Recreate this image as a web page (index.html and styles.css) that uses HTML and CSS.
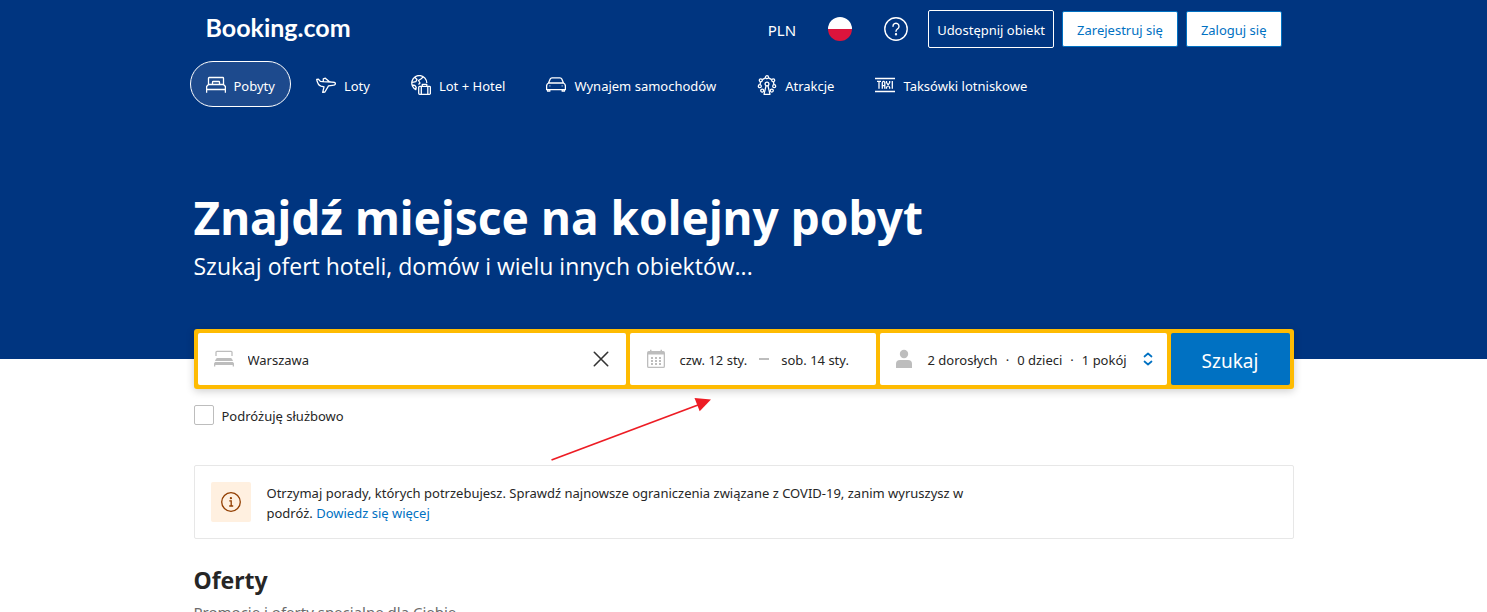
FILE: index.html
```html
<!DOCTYPE html>
<html lang="pl">
<head>
<meta charset="utf-8">
<meta name="viewport" content="width=device-width, initial-scale=1">
<title>Booking.com</title>
<link rel="stylesheet" href="styles.css">
</head>
<body>
<header class="header">
  <div class="container">
    <div class="topbar">
      <a class="logo" href="#">Booking.com</a>
      <div class="actions">
        <button class="currency" type="button">PLN</button>
        <button class="round" type="button" aria-label="Język: polski">
          <svg class="flag" viewBox="0 0 24 24"><path fill="#fff" d="M0 12a12 12 0 0 1 24 0z"/><path fill="#dc143c" d="M0 12a12 12 0 0 0 24 0z"/></svg>
        </button>
        <button class="round" type="button" aria-label="Pomoc">
          <svg class="help" viewBox="0 0 24 24" fill="none" stroke="#fff" stroke-width="1.4" stroke-linecap="round"><circle cx="12" cy="12" r="11.2"/><path d="M9 9.3a3 3 0 1 1 4.6 2.5c-1 .7-1.6 1.2-1.6 2.4"/><circle cx="12" cy="17.3" r=".5" fill="#fff"/></svg>
        </button>
        <a class="btn btn-outline" href="#">Udostępnij obiekt</a>
        <a class="btn btn-light" href="#">Zarejestruj się</a>
        <a class="btn btn-light" href="#">Zaloguj się</a>
      </div>
    </div>
    <nav class="tabs">
      <a class="tab tab-active" href="#">
        <svg class="tab-icon" viewBox="0 0 20 20"><path d="M2.500 9.500V3.200q0-.7.700-.7h13.600q.7 0 .7.700v6.300M6.500 9V7.200q0-.7.700-.7h5.600q.7 0 .7.700V9M.6 17.800V11.500L2.500 9.500h15l1.900 2v6.300M.6 14.500h18.800"/></svg>
        Pobyty</a>
      <a class="tab" href="#">
        <svg class="tab-icon" viewBox="0 0 20 20"><path d="M.7 4.500 2.400 4.200l2 2.200 2.400.2 8.500.4c2.800 0 4.100.8 4.100 1.700s-1.300 1.500-2.900 1.600l-4 .5-3.600 6.200-2.200.4 1.300-5.600-3-.7C2.500 10.300 1.300 7.500.7 4.500zM7.300 6.500V3.800l2-.6 4.200 3.600"/></svg>
        Loty</a>
      <a class="tab" href="#">
        <svg class="tab-icon" viewBox="0 0 20 20"><path d="M5.300 14.900A7.500 7.500 0 1 1 15.800 8M4 2.500l2 2-1.200 2.200-3.300.6M1.300 10l2.500.3 1.400 2-.4 2.300M12.500 1.600l-2.300 2.200L7.500 5.500 9 8l-1.500 1.500"/><rect x="7.700" y="11.300" width="11.700" height="8" rx="1"/><path d="M11.300 11V9.300h4.500V11M10.300 11.500v7.500M16.800 11.500v7.500"/></svg>
        Lot + Hotel</a>
      <a class="tab" href="#">
        <svg class="tab-icon" viewBox="0 0 20 20"><path d="M2.400 8.300 4.200 4q.5-1.200 1.800-1.200h8q1.300 0 1.800 1.200l1.800 4.300M2.500 8h15q1.900 1 1.900 3v3.700H.6V11q0-2 1.900-3zM1.600 14.700v1.500h2.200v-1.500M16.200 14.700v1.500h2.200v-1.500M3.500 10.800h.8M15.700 10.800h.8"/></svg>
        Wynajem samochodów</a>
      <a class="tab" href="#">
        <svg class="tab-icon" viewBox="0 0 20 20"><circle cx="10" cy="2.200" r="1.500"/><circle cx="3.800" cy="5.300" r="1.500"/><circle cx="16.200" cy="5.300" r="1.500"/><circle cx="2.800" cy="11.200" r="1.500"/><circle cx="17.200" cy="11.200" r="1.500"/><circle cx="5.200" cy="15.600" r="1.500"/><circle cx="14.800" cy="15.600" r="1.500"/><circle cx="10" cy="9" r="1.900"/><path d="M5.300 4.600 8.500 2.900M14.700 4.600 11.500 2.900M3.500 6.800l-.4 2.900M16.500 6.800l.4 2.900M9 10.800 7 19.300h6l-2-8.500"/></svg>
        Atrakcje</a>
      <a class="tab" href="#">
        <svg class="tab-icon" viewBox="0 0 20 20"><path d="M0 3.500h20M0 16.500h20M2 6.300h4M4 6.300v7.400M7.300 13.700V7.500l.8-1.200h.9l.8 1.200v6.200M7.300 10.700h2.500M11.500 6v1.500l3.200 5v1.200M14.700 6v1.500l-3.200 5v1.200M17.300 6v7.700"/></svg>
        Taksówki lotniskowe</a>
    </nav>
    <div class="hero">
      <h1 class="hero-title">Znajdź miejsce na kolejny pobyt</h1>
      <p class="hero-text">Szukaj ofert hoteli, domów i wielu innych obiektów...</p>
    </div>
  </div>
</header>
<main class="container main">
  <form class="search">
    <div class="field field-place">
      <svg class="field-icon" viewBox="0 0 20 20"><path fill="none" stroke="#bdbdbd" stroke-width="1.300" d="M2 7V3.200q0-.9.900-.9h14.200q.9 0 .9.900V7"/><path fill="#bdbdbd" d="M3.500 9h13q1 0 1.700 1.200l.8 1.800H1l.8-1.800Q2.500 9 3.500 9zM1 13h18l1 1.500v3h-1.300V16H1.300v1.500H0v-3z"/></svg>
      <input class="place" type="text" value="Warszawa" aria-label="Cel podróży">
      <button class="clear" type="button" aria-label="Wyczyść"><svg viewBox="0 0 16 16"><path fill="none" stroke="#333" stroke-width="1.600" stroke-linecap="round" d="m1.300 1.300 13.400 13.400M14.700 1.300 1.300 14.700"/></svg></button>
    </div>
    <div class="field field-dates">
      <svg class="field-icon" viewBox="0 0 20 20" fill="#bdbdbd"><path d="M1 4q0-2 1.800-2H4V.8h1.500V2h9V.8H16V2h1.200Q19 2 19 4v1.500H1z"/><path fill="none" stroke="#bdbdbd" stroke-width="1.300" d="M1.650 5v12.200q0 1.200 1.200 1.200h14.300q1.200 0 1.200-1.200V5"/><path d="M5 8h2v2H5zM9 8h2v2H9zM13 8h2v2h-2zM5 11h2v2H5zM9 11h2v2H9zM13 11h2v2h-2zM5 14h2v2H5zM9 14h2v2H9zM13 14h2v2h-2z"/></svg>
      <button class="plain" type="button">czw. 12 sty.</button>
      <span class="dash"></span>
      <button class="plain" type="button">sob. 14 sty.</button>
    </div>
    <button class="field field-guests plain" type="button">
      <svg class="field-icon" viewBox="0 0 20 20" fill="#bdbdbd"><circle cx="10" cy="5" r="4.200"/><path d="M2 19v-4q0-4 4-4h8q4 0 4 4v4z"/></svg>
      <span class="guests"><span>2 dorosłych</span><span>·</span><span>0 dzieci</span><span>·</span><span>1 pokój</span></span>
      <svg class="chevrons" viewBox="0 0 10 14"><path fill="none" stroke="#0071c2" stroke-width="1.700" stroke-linecap="round" stroke-linejoin="round" d="m1.500 4.500 3.500-3 3.500 3M1.500 9.500l3.500 3 3.500-3"/></svg>
    </button>
    <button class="submit" type="submit">Szukaj</button>
  </form>
  <svg class="arrow" viewBox="0 0 162 64"><path stroke="#ed1c24" stroke-width="1.800" d="M1.500 62 148 7"/><path fill="#ed1c24" d="M161 1.500 144.500 0l5.200 13.200z"/></svg>
  <label class="business"><input class="check" type="checkbox"><span class="business-text">Podróżuję służbowo</span></label>
  <section class="notice">
    <span class="notice-badge"><svg viewBox="0 0 20 20" fill="none" stroke="#923e01" stroke-width="1.300"><circle cx="10" cy="10" r="9.300"/><path d="M8.300 8.800h1.900v5M8.200 14h4"/><circle cx="9.900" cy="6.200" r=".5" fill="#923e01"/></svg></span>
    <p class="notice-text">Otrzymaj porady, których potrzebujesz. Sprawdź najnowsze ograniczenia związane z COVID-19, zanim wyruszysz w podróż. <a class="link" href="#">Dowiedz się więcej</a></p>
  </section>
  <section class="offers">
    <h2 class="offers-title">Oferty</h2>
    <p class="offers-text">Promocje i oferty specjalne dla Ciebie</p>
  </section>
</main>
</body>
</html>
```
FILE: styles.css
```css
* { box-sizing: border-box; }
body {
  margin: 0;
  height: 100vh;
  overflow: hidden;
  background: #fff;
  color: #262626;
  font: 13px/20px "Noto Sans", "Open Sans", sans-serif;
}
h1, h2, p { margin: 0; }
a { text-decoration: none; }
button, input { font: inherit; color: inherit; }
button { border: 0; padding: 0; background: none; cursor: pointer; }
svg { display: block; flex: none; }

.container { max-width: 1100px; margin: 0 auto; }
.header { background: #003580; color: #fff; padding-bottom: 77px; }

.topbar { display: flex; justify-content: space-between; align-items: center; height: 57px; padding: 0 12px; }
.logo { color: #fff; font: 700 25px/32px Lato, sans-serif; padding-bottom: 4px; }
.actions { display: flex; align-items: center; gap: 8px; }
.currency { font-size: 15px; padding: 2px 12px 0 0; }
.round { width: 48px; display: flex; justify-content: center; }
.flag, .help { width: 24px; height: 24px; }
.btn { padding: 8px 14px 6px; border: 1px solid #0071c2; border-radius: 2px; white-space: nowrap; }
.btn-outline { padding: 9px 8px 7px; border-color: #fff; color: #fff; }
.btn-light { background: #fff; color: #0071c2; }

.tabs { display: flex; gap: 9px; margin: 4px -4px 0; }
.tab { display: flex; align-items: center; gap: 8px; height: 46px; padding: 3px 15px 0; border: 1px solid transparent; border-radius: 23px; color: #fff; white-space: nowrap; }
.tab-active { border-color: #fff; background: #1d4a8d; }
.tab-icon { width: 20px; height: 20px; margin-bottom: 2px; fill: none; stroke: #fff; stroke-width: 1.3; stroke-linejoin: round; }

.hero { padding-top: 78px; }
.hero-title { font-size: 46px; line-height: 64px; }
.hero-text { padding-top: 1px; font: 23px/32px "Open Sans", "Noto Sans", sans-serif; }

.main { position: relative; }
.search {
  display: grid;
  grid-template-columns: 428fr 246fr 287fr 119fr;
  gap: 4px;
  height: 60px;
  margin-top: -30px;
  padding: 4px;
  border-radius: 3px;
  background: #febb02;
  box-shadow: 0 2px 8px rgba(0, 0, 0, .2);
}
.field { display: flex; align-items: center; min-width: 0; padding: 0 16px; border-radius: 2px; background: #fff; }
.field-icon { width: 20px; height: 20px; margin-right: 14px; }
.place { flex: 1; min-width: 0; padding: 2px 0 0; border: 0; outline: 0; background: none; }
.clear svg { width: 16px; height: 16px; margin-right: 1px; }
.plain { padding-top: 2px; white-space: nowrap; }
.dash { width: 10px; height: 2px; margin: 0 12px; background: #bdbdbd; }
.field-guests { padding: 0 14px; background: #fff; }
.guests { display: flex; gap: 8px; padding-top: 2px; }
.chevrons { width: 10px; height: 14px; margin-left: auto; }
.submit { padding-top: 3px; border-radius: 2px; background: #0071c2; color: #fff; font-size: 19px; }

.arrow { position: absolute; left: 356px; top: 69px; width: 162px; height: 64px; }

.business { display: flex; align-items: center; gap: 8px; width: max-content; height: 20px; margin-top: 16px; }
.business-text { padding-top: 2px; }
.check { appearance: none; width: 20px; height: 20px; margin: 0; border: 1px solid #bdbdbd; border-radius: 2px; background: #fff; }

.notice { display: flex; gap: 16px; margin-top: 40px; padding: 16px; border: 1px solid #e7e7e7; border-radius: 2px; }
.notice-badge { display: grid; place-items: center; width: 40px; height: 40px; border-radius: 2px; background: #fff0e0; }
.notice-badge svg { width: 20px; height: 20px; }
.notice-text { max-width: 720px; height: 40px; padding-top: 1px; }
.link { color: #0071c2; }

.offers { margin-top: 25px; }
.offers-title { font-size: 23px; line-height: 32px; }
.offers-text { margin-top: 6px; color: #6b6b6b; font-size: 15px; }
```
